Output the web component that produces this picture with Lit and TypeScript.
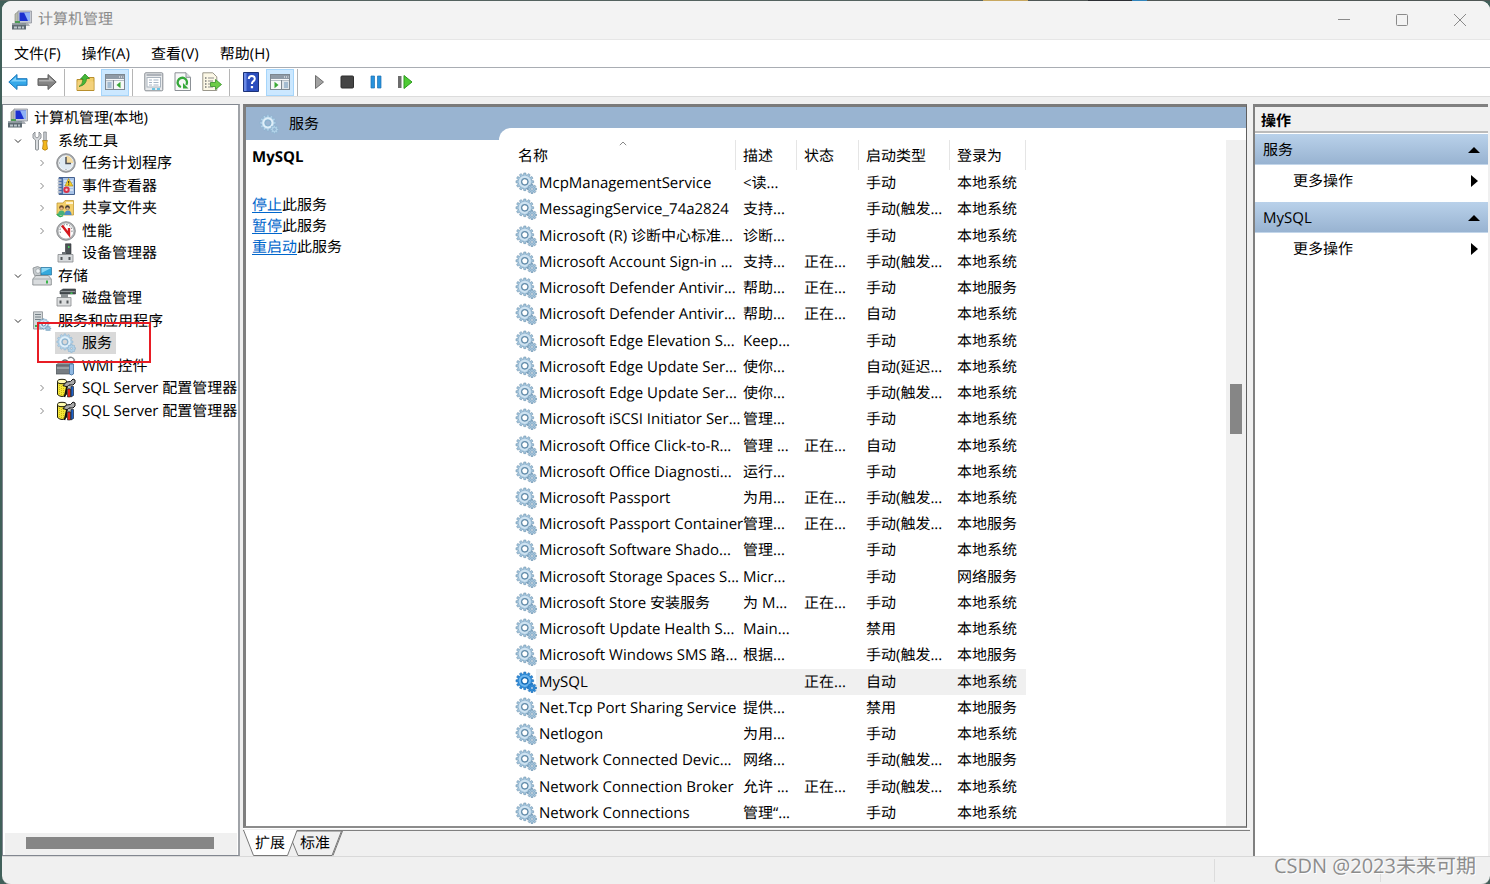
import { LitElement, html, svg, css, nothing, TemplateResult } from "lit";
import { customElement, property, state } from "lit/decorators.js";
import { classMap } from "lit/directives/class-map.js";

/** Outline of a toothed wheel with a round hole, to be filled with the even-odd rule. */
function gearPath(cx: number, cy: number, outer: number, inner: number, hole: number, teeth: number): string {
  const pts: string[] = [];
  const step = (Math.PI * 2) / teeth;
  for (let i = 0; i < teeth; i++) {
    const a = i * step;
    const corners: [number, number][] = [[inner, -0.34], [outer, -0.22], [outer, 0.22], [inner, 0.34]];
    for (const [r, k] of corners) {
      pts.push(`${(cx + r * Math.cos(a + k * step)).toFixed(2)} ${(cy + r * Math.sin(a + k * step)).toFixed(2)}`);
    }
  }
  return `M${pts.join("L")}ZM${cx - hole} ${cy}a${hole} ${hole} 0 1 0 ${hole * 2} 0a${hole} ${hole} 0 1 0 ${-hole * 2} 0Z`;
}

const BIG_GEAR = gearPath(9.8, 9.8, 8.9, 7, 2.9, 12);
const SMALL_GEAR = gearPath(17, 17, 4.7, 3.4, 1.2, 8);

const gears = (fill: string, edge: string, light: string) => svg`
  <path d=${BIG_GEAR} fill=${fill} stroke=${edge} stroke-width="0.5" fill-rule="evenodd"/>
  <circle cx="9.8" cy="9.8" r="5" fill="none" stroke=${light} stroke-width="2.200"/>
  <circle cx="9.8" cy="9.8" r="3.3" fill="none" stroke=${edge} stroke-width="1"/>
  <path d=${SMALL_GEAR} fill=${fill} stroke=${edge} stroke-width="0.6" fill-rule="evenodd"/>`;

const consoleWindow = (arrow: TemplateResult, flip: boolean) => svg`
  <rect x="0.5" y="2.5" width="19" height="15" fill="#f6f7f8" stroke="#7d8790"/>
  <rect x="1" y="3" width="18" height="4" fill="#8f9aa6"/>
  <path d="M14 5h1M16 5h1M18 5h.6" stroke="#fff"/>
  <path d="M1 8.500h18" stroke="#b6bec6"/>
  <rect x=${flip ? 12 : 1} y="9" width="7" height="8" fill="#dfe5ea"/>
  <path d=${flip ? "M11.500 8v9" : "M8.500 8v9"} stroke="#7d8790"/>
  <path d=${flip ? "M14 11h4M14 13h4M14 15h4" : "M2.500 11h4M2.500 13h4M2.500 15h4"} stroke="#6a93b8"/>
  ${arrow}`;

const icons: Record<string, TemplateResult> = {
  computer: svg`
    <path d="M3 4l4-3v11l-4 1z" fill="#b9bdae" stroke="#7c8078" stroke-width=".6"/>
    <path d="M6 1h13.500v12H6z" fill="#c8ccd4" stroke="#868b94" stroke-width=".7"/>
    <path d="M7.500 2.500h10.500v8.500H7.500z" fill="#1b2fd0"/>
    <path d="M12 2.500h6v8.500h-2z" fill="#8fb2f6"/>
    <path d="M10 13h6l2 3H9z" fill="#a8adb3"/>
    <path d="M0 13.500h14v6H0z" fill="#5f6b73"/>
    <path d="M0 13.500h14V15H0z" fill="#8c979e"/>
    <path d="M2 16.500h3v2H2zM6 16.500h3v2H6zM10 16.500h2v2h-2z" fill="#bcc6cc"/>
    <path d="M3 11h5v2H3z" fill="#4c9b55"/>`,
  tools: svg`
    <path d="M3 1L1 3v4l2.500 2v9.500q1.500 1.500 3 0V9L9 7V3L7 1v4.500L5 7 3 5.500z" fill="#d9dcdf" stroke="#777c80" stroke-width=".8"/>
    <path d="M11.700 1h2.600v9h-2.600z" fill="#c9cdd1" stroke="#777c80" stroke-width=".7"/>
    <path d="M10.500 9.500h5l-.8 2.500.8 6q-2.500 2.500-5 0l.8-6z" fill="#f3b71c" stroke="#a87309" stroke-width=".7"/>`,
  clock: svg`
    <circle cx="10" cy="10" r="9.300" fill="#a9adb0" stroke="#77797c" stroke-width=".8"/>
    <circle cx="10" cy="10" r="7.300" fill="#dfeaf3" stroke="#fff" stroke-width=".8"/>
    <path d="M10 10V2.800a7.200 7.200 0 0 1 7.200 7.200z" fill="#f4dba0"/>
    <path d="M10 4v6.500h5" fill="none" stroke="#4b4f55" stroke-width="1.500"/>
    <path d="M10 16v1M3 10h1" stroke="#8f959a"/>`,
  events: svg`
    <path d="M3 1.500h15.500v17H3z" fill="#a8c3e6" stroke="#44608f"/>
    <path d="M3.500 2h3.500v16H3.500z" fill="#4a6da6"/>
    <path d="M1.500 4h4M1.500 7h4M1.500 10h4M1.500 13h4M1.500 16h4" stroke="#c8ccd1" stroke-width="1.300"/>
    <path d="M8 5h9M8 8h9M8 11h9M8 14h9" stroke="#fff"/>
    <path d="M12.500 2.500l4.500 7.500H9z" fill="#f7cf2b" stroke="#a8860a" stroke-width=".6"/>
    <path d="M12.700 5v2.500M12.700 8.300v.9" stroke="#222"/>
    <circle cx="10.500" cy="13.800" r="3.200" fill="#d9334a"/>
    <circle cx="10.500" cy="13.800" r="1.200" fill="#f6c9cf"/>`,
  shared: svg`
    <path d="M1 5h6l2-2.500h8.500V17H1z" fill="#f5d06b" stroke="#c29a35" stroke-width=".8"/>
    <path d="M10 4h7v2h-7z" fill="#fff3cf"/>
    <circle cx="5.500" cy="9.500" r="2.300" fill="#6d4a2a"/><circle cx="11.500" cy="9.500" r="2.300" fill="#3f3a38"/>
    <circle cx="5.500" cy="10.500" r="1.300" fill="#eab98c"/><circle cx="11.500" cy="10.500" r="1.300" fill="#eab98c"/>
    <path d="M2 17q0-4.500 3.500-4.500T9 17z" fill="#48b07b"/><path d="M8.500 17q0-4.500 3.500-4.500t3.500 4.500z" fill="#4d8bc8"/>
    <path d="M1 16q3 4 6 1.500" fill="none" stroke="#2fae5e" stroke-width="1.600"/>`,
  perf: svg`
    <circle cx="10" cy="10" r="9.300" fill="#b3b6b8" stroke="#77797c" stroke-width=".8"/>
    <circle cx="10" cy="10" r="7.400" fill="#fff"/>
    <path d="M4.500 12a6 6 0 1 1 11 0" fill="none" stroke="#6e7377" stroke-dasharray="1.500 1.500"/>
    <path d="M6 4.500L13 13.500V7" fill="none" stroke="#d61a1f" stroke-width="2.400"/>`,
  device: svg`
    <path d="M9.500.8h5.500V11H9.500z" fill="#4e5357" stroke="#303437" stroke-width=".6"/>
    <path d="M12 3h1.500v2H12z" fill="#44d35a"/>
    <path d="M6 9h4v3H6z" fill="#6c7175"/>
    <path d="M2 11.500h15V19H2z" fill="#d7dadc" stroke="#85898c" stroke-width=".8"/>
    <path d="M4.500 14h2v3h-2zM12.500 14h2v3h-2z" fill="#53575a"/>`,
  storage: svg`
    <path d="M1 2q5-3 8 0v8H3q-2-2-2-8z" fill="#c5cacd" stroke="#7e8487" stroke-width=".7"/>
    <circle cx="6" cy="5" r="2.300" fill="#eef2f4" stroke="#8b9397" stroke-width=".6"/>
    <path d="M9 1.500h10.500V9H9z" fill="#35a9dd" stroke="#226f99" stroke-width=".7"/>
    <path d="M9.500 2h9.500L9.500 7z" fill="#8ed8f5"/>
    <path d="M.8 13l3-3.500h12.500l3 3.500v6H.8z" fill="#d9dcde" stroke="#7e8487" stroke-width=".8"/>
    <path d="M1 13h18" stroke="#9ba1a4" stroke-width=".8"/>
    <path d="M14 14.500h2v3h-2z" fill="#3cb54a"/>`,
  disk: svg`
    <path d="M4 3l3-2h12.500v5H4z" fill="#4b5054" stroke="#2e3235" stroke-width=".6"/>
    <path d="M4.500 3h14.500v1H4.500z" fill="#8d9397"/>
    <path d="M14.500 4.500h2V6h-2z" fill="#3ccf50"/>
    <path d="M5 6h7v4H5z" fill="#8a8f92"/>
    <path d="M1 9.500h14V18H1z" fill="#dcdedf" stroke="#85898c" stroke-width=".8"/>
    <path d="M3.500 12.500h2v3h-2zM10.500 12.500h2v3h-2z" fill="#53575a"/>`,
  apps: svg`
    <path d="M1.500.8h9V18h-9z" fill="#d3d8da" stroke="#868d90" stroke-width=".8"/>
    <path d="M3 3.500h6M3 6h6M3 8.500h6" stroke="#758087"/>
    <path d="M3 14h2v2H3z" fill="#3fae54"/>
    <g transform="translate(5.500 7) scale(.62)">${gears("#9fc3dd", "#5a87a8", "#dcebf5")}</g>`,
  service: gears("#a2c3db", "#5f88a6", "#cfe3f1"),
  serviceActive: gears("#2f8ad6", "#1467b0", "#6cb5ee"),
  servicePale: gears("#b2d2e8", "#86aecb", "#e0eff9"),
  wmi: svg`
    <path d="M0 9l4-3h12v3H0z" fill="#9aa0a5" stroke="#5d6366" stroke-width=".6"/>
    <path d="M0 9h16v9H0z" fill="#767c81" stroke="#4d5356" stroke-width=".7"/>
    <path d="M1 12h14" stroke="#bfc5c9"/>
    <path d="M6 5.500q3-3 6 0" fill="none" stroke="#5d6366" stroke-width="1.200"/>
    <path d="M12 2.500q4-3 6.500 1.500l-2 3-2-1" fill="none" stroke="#83898d" stroke-width="1.500"/>
    <path d="M13.500 8h4v10q-2 2-4 0z" fill="#8fb8e2" stroke="#3d6c9c" stroke-width=".8"/>`,
  sql: svg`
    <path d="M1.500 3.500v13q4.500 4 9 0v-13z" fill="#f4e53a" stroke="#1c1b0a"/>
    <ellipse cx="6" cy="3.500" rx="4.500" ry="2.200" fill="#fffbb0" stroke="#1c1b0a"/>
    <path d="M3.500 7v10M5.500 8v10M7.500 8v9" stroke="#c9b90d" stroke-dasharray="1 1"/>
    <path d="M7 7.500l3.500-3.500 4-.5L17 1l2 1v3l-2 2-4 0-1.500 2z" fill="#a9a9a9" stroke="#111"/>
    <path d="M11 8.500L8.500 19" stroke="#111" stroke-width="1.600"/>
    <path d="M12 7.500h2v3.500h-2z" fill="#fff" stroke="#111" stroke-width=".6"/>
    <path d="M11.500 11h3v8h-3z" fill="#e2231a" stroke="#111" stroke-width=".6"/>
    <path d="M15 8.500h2.500v9L15 19z" fill="#1f62c9" stroke="#111" stroke-width=".6"/>`,
  back: svg`<path d="M.8 10L9 2.500v4.200h10v6.600H9v4.200z" fill="#35a8e8" stroke="#1a78bd"/><path d="M2.800 9.500L8 5v3h10v1.500z" fill="#7fd0fa"/>`,
  forward: svg`<path d="M19.200 10L11 2.500v4.200H1v6.600h10v4.200z" fill="#858585" stroke="#5c5c5c"/><path d="M17.200 9.500L12 5v3H2v1.500z" fill="#b0b0b0"/>`,
  folderUp: svg`
    <path d="M1 7.500h6l1.500-2H18V18.500H1z" fill="#f0ce6c" stroke="#b88f2d"/>
    <path d="M1.500 9.500H17.500V18h-16z" fill="#f3d17c"/>
    <path d="M3 14.500q4-2 4-7.500H4.500L9 2l4.500 4.500H10.500Q10.500 13 3 14.500z" fill="#45b839" stroke="#24821d" stroke-width=".7"/>`,
  treePane: consoleWindow(svg`<path d="M15.500 9.800v6.400L11.500 13z" fill="#3aa935"/>`, false),
  actionPane: consoleWindow(svg`<path d="M4.500 9.800v6.400L8.500 13z" fill="#3aa935"/>`, true),
  properties: svg`
    <rect x=".8" y=".8" width="18" height="18" rx="1" fill="#e9ebed" stroke="#858b91"/>
    <path d="M2.500 3h15" stroke="#9aa1a8" stroke-width="1.400"/>
    <rect x="3" y="5.500" width="13.500" height="9.500" fill="#fff" stroke="#a9b3bd"/>
    <path d="M5 8h3M5 10.500h3M5 13h3M9.500 8h5M9.500 10.500h5M9.500 13h5" stroke="#a5b4c4"/>
    <path d="M8 17h3M13 17h3" stroke="#46b8de" stroke-width="1.500"/>`,
  refresh: svg`
    <path d="M2 .8h11l4.500 4.500V18.500H2z" fill="#f7f8f8" stroke="#8c9196"/>
    <path d="M13 .8v4.500h4.500" fill="#dde1e4" stroke="#8c9196"/>
    <path d="M8 15A4.700 4.700 0 1 1 13.300 13" fill="none" stroke="#35a83a" stroke-width="2.300"/>
    <path d="M10 11v5.500h5.500z" fill="#35a83a"/>`,
  exportList: svg`
    <path d="M.8.8h10l4 4V18.500h-14z" fill="#fcf8e6" stroke="#9a978b"/>
    <path d="M3 6h1.500M3 9h1.500M3 12h1.500M3 15h1.500" stroke="#777" stroke-width="1.500"/>
    <path d="M6 6h6M6 9h5M6 12h3M6 15h5" stroke="#8d8d8d"/>
    <path d="M8.500 10.500h5V7.500l6 5-6 5v-3h-5z" fill="#6dcc45" stroke="#35902a" stroke-width=".8"/>`,
  help: svg`
    <path d="M2.500.5h15v19h-15z" fill="#2c4fbe" stroke="#1b3178"/>
    <path d="M3 1h2.500v18H3z" fill="#6b8ae6"/>
    <path d="M7.800 7q0-3 3-3t3 2.700q0 1.700-1.700 2.700-1.200.8-1.200 2.600" fill="none" stroke="#fff" stroke-width="2"/>
    <path d="M9.800 14h2.300v2.300H9.800z" fill="#fff"/>`,
  play: svg`<path d="M6.500 3.500v13L14.500 10z" fill="#a2a2a2" stroke="#6e6e6e"/>`,
  stop: svg`<rect x="3" y="4" width="12.500" height="12" rx="1" fill="#454545" stroke="#2f2f2f"/>`,
  pause: svg`<path d="M4 4h3.500v12H4zM10.500 4h3.500v12h-3.500z" fill="#2893dd" stroke="#1b71b1" stroke-width=".7"/>`,
  resume: svg`<path d="M2 4h3.500v12H2z" fill="#6c6c6c"/><path d="M8 3.500v13L16 10z" fill="#4fcb35" stroke="#2b9a1c"/>`,
};

const icon = (name: string, cls = "icon") => {
  const box = name.startsWith("service") ? "0 0 22 22" : "0 0 20 20";
  return html`<svg class=${cls} viewBox=${box} aria-hidden="true">${icons[name]}</svg>`;
};

interface TreeItem { label: string; icon: string; level: number; open?: boolean; selected?: boolean }

const TREE: TreeItem[] = [
  { label: "计算机管理(本地)", icon: "computer", level: 0 },
  { label: "系统工具", icon: "tools", level: 1, open: true },
  { label: "任务计划程序", icon: "clock", level: 2, open: false },
  { label: "事件查看器", icon: "events", level: 2, open: false },
  { label: "共享文件夹", icon: "shared", level: 2, open: false },
  { label: "性能", icon: "perf", level: 2, open: false },
  { label: "设备管理器", icon: "device", level: 2 },
  { label: "存储", icon: "storage", level: 1, open: true },
  { label: "磁盘管理", icon: "disk", level: 2 },
  { label: "服务和应用程序", icon: "apps", level: 1, open: true },
  { label: "服务", icon: "servicePale", level: 2, selected: true },
  { label: "WMI 控件", icon: "wmi", level: 2 },
  { label: "SQL Server 配置管理器", icon: "sql", level: 2, open: false },
  { label: "SQL Server 配置管理器", icon: "sql", level: 2, open: false },
];

const RUN = "正在...";
const TRIG = "手动(触发...";
const SYS = "本地系统";
const LOC = "本地服务";

const SERVICES: string[][] = [
  ["McpManagementService", "<读...", "", "手动", SYS],
  ["MessagingService_74a2824", "支持...", "", TRIG, SYS],
  ["Microsoft (R) 诊断中心标准...", "诊断...", "", "手动", SYS],
  ["Microsoft Account Sign-in ...", "支持...", RUN, TRIG, SYS],
  ["Microsoft Defender Antivir...", "帮助...", RUN, "手动", LOC],
  ["Microsoft Defender Antivir...", "帮助...", RUN, "自动", SYS],
  ["Microsoft Edge Elevation S...", "Keep...", "", "手动", SYS],
  ["Microsoft Edge Update Ser...", "使你...", "", "自动(延迟...", SYS],
  ["Microsoft Edge Update Ser...", "使你...", "", TRIG, SYS],
  ["Microsoft iSCSI Initiator Ser...", "管理...", "", "手动", SYS],
  ["Microsoft Office Click-to-R...", "管理 ...", RUN, "自动", SYS],
  ["Microsoft Office Diagnosti...", "运行...", "", "手动", SYS],
  ["Microsoft Passport", "为用...", RUN, TRIG, SYS],
  ["Microsoft Passport Container", "管理...", RUN, TRIG, LOC],
  ["Microsoft Software Shado...", "管理...", "", "手动", SYS],
  ["Microsoft Storage Spaces S...", "Micr...", "", "手动", "网络服务"],
  ["Microsoft Store 安装服务", "为 M...", RUN, "手动", SYS],
  ["Microsoft Update Health S...", "Main...", "", "禁用", SYS],
  ["Microsoft Windows SMS 路...", "根据...", "", TRIG, LOC],
  ["MySQL", "", RUN, "自动", SYS],
  ["Net.Tcp Port Sharing Service", "提供...", "", "禁用", LOC],
  ["Netlogon", "为用...", "", "手动", SYS],
  ["Network Connected Devic...", "网络...", "", TRIG, LOC],
  ["Network Connection Broker", "允许 ...", RUN, TRIG, SYS],
  ["Network Connections", "管理“...", "", "手动", SYS],
];

const TOOLS: [string, string][][] = [
  [["back", "后退"], ["forward", "前进"]],
  [["folderUp", "上移"], ["treePane", "显示/隐藏控制台树"]],
  [["properties", "属性"], ["refresh", "刷新"], ["exportList", "导出列表"]],
  [["help", "帮助"], ["actionPane", "显示/隐藏操作窗格"]],
  [["play", "启动服务"], ["stop", "停止服务"], ["pause", "暂停服务"], ["resume", "重启动服务"]],
];

const base = css`
  :host { font-family: "Open Sans", "Noto Sans CJK SC", sans-serif; font-size: 15px; line-height: 20px; color: #000; text-rendering: geometricPrecision; }
  * { box-sizing: border-box; }
  button { font: inherit; color: inherit; text-rendering: inherit; background: none; border: 0; padding: 0; margin: 0; text-align: left; white-space: nowrap; }
  svg { display: block; flex: none; }
  .icon { width: 20px; height: 20px; }
`;

@customElement("mmc-tree")
class MmcTree extends LitElement {
  static styles = [base, css`
    :host { flex: 0 0 238px; min-width: 0; display: flex; flex-direction: column; background: #fff; border: 2px solid #828790; border-width: 1px 2px 1px 1px; border-right-color: #a0a3a8; }
    .view { flex: 1; position: relative; overflow: hidden; }
    .tree { display: grid; grid-auto-rows: 1fr; height: 315px; margin: 2px 0 0; padding: 0; list-style: none; }
    .item { display: flex; align-items: center; padding-left: 4px; }
    .level1 { padding-left: 10px; }
    .level2 { padding-left: 34px; }
    .twisty { width: 18px; height: 18px; display: grid; place-items: center start; }
    .blank { width: 18px; }
    .chevron { width: 10px; height: 10px; fill: none; stroke: #333; }
    .closed { stroke: #888; }
    .node { display: flex; align-items: center; height: 22px; padding: 0 4px 0 1px; gap: 6px; }
    .selected { background: #d9d9d9; }
    .mark { position: absolute; left: 34px; top: 217px; width: 114px; height: 41px; border: 2px solid #e81c24; pointer-events: none; }
    .bar { height: 22px; margin: 0 1px 0 2px; background: #f0f0f0; padding: 4px 23px 6px 21px; }
    .thumb { height: 12px; background: #868686; }
  `];

  render() {
    return html`
      <div class="view">
        <ul class="tree">
          ${TREE.map((t) => html`
            <li class="item level${t.level}">
              ${t.level === 0 ? nothing : t.open === undefined ? html`<span class="blank"></span>` : html`
                <button class="twisty" aria-label=${t.label} aria-expanded=${t.open}>
                  <svg class=${classMap({ chevron: true, closed: !t.open })} viewBox="0 0 10 10">
                    <path d=${t.open ? "M2 3.500l3 3 3-3" : "M3.500 2l3 3-3 3"}/>
                  </svg>
                </button>`}
              <button class=${classMap({ node: true, selected: !!t.selected })}>${icon(t.icon)}<span>${t.label}</span></button>
            </li>`)}
        </ul>
        <div class="mark"></div>
      </div>
      <div class="bar"><div class="thumb"></div></div>`;
  }
}

@customElement("mmc-services")
class MmcServices extends LitElement {
  @state() private current = "MySQL";

  static styles = [base, css`
    :host { flex: 1; min-width: 0; display: flex; flex-direction: column; }
    .frame { flex: 1; min-height: 0; display: grid; grid-template-columns: 253px 1fr; background: #99b4d1; border: 3px solid #7a7a7a; border-width: 3px 1px 2px 3px; border-color: #7a7a7a #5f5f5f #8c8c8c #7f7f7f; margin-right: 3px; }
    .side { display: flex; flex-direction: column; }
    .title { height: 33px; display: flex; align-items: center; gap: 10px; padding-left: 13px; }
    .detail { flex: 1; background: #fff; padding: 7px 6px; line-height: 21px; }
    .name { margin: 0 0 27px; font-size: 15px; line-height: 21px; font-weight: 700; }
    .line { margin: 0; }
    a { color: #0066cc; text-underline-offset: 2px; }
    .list { display: flex; flex-direction: column; min-height: 0; background: #fff; margin-top: 21px; border-top-left-radius: 12px; padding: 12px 0 0 10px; }
    .body { flex: 1; min-height: 0; display: flex; justify-content: space-between; }
    table { display: flex; flex-direction: column; width: 517px; border-spacing: 0; white-space: nowrap; }
    tbody { flex: 1; display: grid; grid-auto-rows: 1fr; }
    tr { display: grid; grid-template-columns: 227px 61px 62px 91px 76px; align-items: center; }
    thead tr { height: 30px; align-items: stretch; }
    th { position: relative; padding: 6px 0 0 7px; font-weight: 400; text-align: left; border-right: 1px solid #e5e5e5; }
    th:first-child { padding-left: 9px; }
    .sort { position: absolute; left: 110px; top: 1px; width: 8px; height: 5px; fill: none; stroke: #888; }
    td { padding: 0 0 0 7px; }
    .svc { display: flex; align-items: center; gap: 2px; padding-left: 6px; }
    .gear { width: 22px; height: 22px; }
    .chosen { background: linear-gradient(to right, transparent 27px, #f0f0f0 27px); }
    .vbar { width: 20px; background: #f0f0f0; display: grid; grid-template-rows: 244fr 50fr 392fr; justify-items: center; }
    .thumb { grid-row: 2; width: 12px; background: #868686; }
    .tabs { position: relative; height: 28px; display: flex; padding-left: 12px; gap: 15px; background: linear-gradient(#fff 1px, #f0f0f0 1px 2px, #808080 2px 3px, transparent 3px); }
    .shape { position: absolute; left: 0; top: 2px; width: 102px; height: 26px; }
    .tab { position: relative; padding-top: 2px; }
  `];

  render() {
    return html`
      <div class="frame">
        <div class="side">
          <div class="title">${icon("servicePale")}<span>服务</span></div>
          <div class="detail">
            <h2 class="name">${this.current}</h2>
            ${["停止", "暂停", "重启动"].map((a) => html`<p class="line"><a href="#">${a}</a>此服务</p>`)}
          </div>
        </div>
        <div class="list">
          <div class="body">
            <table>
              <thead><tr>
                <th scope="col">名称<svg class="sort" viewBox="0 0 8 5"><path d="M.8 4.200L4 1l3.200 3.200"/></svg></th>
                ${["描述", "状态", "启动类型", "登录为"].map((h) => html`<th scope="col">${h}</th>`)}
              </tr></thead>
              <tbody>
                ${SERVICES.map(([name, ...rest]) => {
                  const chosen = name === this.current;
                  return html`
                    <tr class=${classMap({ chosen })} @click=${() => (this.current = name)}>
                      <td class="svc">${icon(chosen ? "serviceActive" : "service", "gear")}<span>${name}</span></td>
                      ${rest.map((c) => html`<td>${c}</td>`)}
                    </tr>`;
                })}
              </tbody>
            </table>
            <div class="vbar"><div class="thumb"></div></div>
          </div>
        </div>
      </div>
      <div class="tabs">
        <svg class="shape" viewBox="0 0 102 26" fill="none">
          <path d="M50 1h48.500l-9.500 24.500H55L49.500 12z" fill="#f0f0f0" stroke="#777"/>
          <path d="M99.500 1L90 25.500" stroke="#777"/>
          <path d="M.5 0l10 25.500h34L54 0z" fill="#fff"/>
          <path d="M.5 0l10 25.500h34L54 .5" stroke="#777"/>
        </svg>
        <button class="tab">扩展</button><button class="tab">标准</button>
      </div>`;
  }
}

@customElement("mmc-actions")
class MmcActions extends LitElement {
  @property({ attribute: false }) groups: string[] = [];

  static styles = [base, css`
    :host { flex: 0 0 235px; display: flex; flex-direction: column; background: #fff; border-left: 2px solid #808080; border-top: 3px solid #808080; }
    .heading { height: 26px; margin: 0; padding: 4px 6px 0; font-size: 15px; line-height: 20px; font-weight: 700; background: #f0f0f0; border-bottom: 2px solid #bbb; }
    .group { padding: 1px 0 5px; }
    .row { display: flex; align-items: center; justify-content: space-between; width: 100%; height: 31px; padding: 0 8px; }
    .more { padding: 0 10px 0 38px; }
    .top { padding-top: 2px; background: linear-gradient(#b9d1ea, #98b3d1); border-bottom: 1px solid #c3d6ea; }
    .up { width: 12px; height: 6px; }
    .right { width: 7px; height: 12px; }
  `];

  render() {
    return html`
      <h2 class="heading">操作</h2>
      ${this.groups.map((g) => html`
        <div class="group">
          <button class="row top"><span>${g}</span><svg class="up" viewBox="0 0 12 6"><path d="M0 6L6 0l6 6z"/></svg></button>
          <button class="row more"><span>更多操作</span><svg class="right" viewBox="0 0 7 12"><path d="M0 0l7 6-7 6z"/></svg></button>
        </div>`)}`;
  }
}

@customElement("app-root")
class AppRoot extends LitElement {
  static styles = [base, css`
    :host { display: block; height: 100vh; padding: 1px 0 0 2px; overflow: hidden; background: linear-gradient(to right, #54625f 66%, #c8a860 66% 69%, #4f5755 69% 73%, #2c2e33 73% 76%, #3286bd 76% 77%, #4f5755 77%) top / 100% 1px no-repeat, #41605a; }
    .window { position: relative; height: 100%; display: flex; flex-direction: column; background: #f0f0f0; border-radius: 9px; overflow: hidden; border-bottom: 1px solid #a5a5a5; }
    .titlebar { height: 39px; display: flex; align-items: center; gap: 6px; padding: 0 1px 0 10px; background: #f3f3f3; border-bottom: 1px solid #e6e6e6; color: #8b8b8b; }
    .caption { flex: 1; padding-bottom: 2px; margin: 0; font-size: 15px; font-weight: 400; }
    .control { width: 58px; height: 38px; display: grid; place-items: center; }
    .glyph { width: 14px; height: 14px; fill: none; stroke: #8a8a8a; }
    .controls { display: flex; }
    .menu { height: 27px; display: flex; gap: 21px; padding: 0 12px; background: #fff; }
    .tools { height: 30px; display: flex; align-items: center; background: #fff; border-top: 1px solid #a9adb3; border-bottom: 1px solid #dcdcdc; padding-left: 2px; }
    .set { display: flex; gap: 1px; }
    .set + .set { margin-left: 3px; padding-left: 7px; border-left: 1px solid #b5b5b5; }
    .tool { width: 28px; height: 27px; display: grid; place-items: center; border: 1px solid transparent; }
    .on { background: #cce8ff; border-color: #a6d5fa; }
    .main { flex: 1; min-height: 0; display: flex; padding: 7px 2px 0 0; gap: 3px; }
    .status { height: 28px; display: flex; justify-content: flex-end; border-top: 1px solid #d9d9d9; padding: 2px 2px 2px 0; }
    .cell { width: 166px; border-left: 1px solid #dcdcdc; }
    .narrow { width: 108px; }
    .credit { position: absolute; right: 14px; bottom: 4px; font-size: 20px; line-height: 28px; color: #8c8c8c; text-shadow: 1px 1px 0 #fff; }
  `];

  render() {
    return html`
      <div class="window">
        <header class="titlebar">
          ${icon("computer")}
          <h1 class="caption">计算机管理</h1>
          <div class="controls">
            <button class="control" aria-label="最小化"><svg class="glyph" viewBox="0 0 14 14"><path d="M1 6.500h12"/></svg></button>
            <button class="control" aria-label="最大化"><svg class="glyph" viewBox="0 0 14 14"><rect x="1.500" y="1.500" width="11" height="11" rx="1"/></svg></button>
            <button class="control" aria-label="关闭"><svg class="glyph" viewBox="0 0 14 14"><path d="M1 1l12 12M13 1L1 13"/></svg></button>
          </div>
        </header>
        <nav class="menu">
          ${["文件(F)", "操作(A)", "查看(V)", "帮助(H)"].map((m) => html`<button>${m}</button>`)}
        </nav>
        <div class="tools" role="toolbar">
          ${TOOLS.map((set) => html`
            <div class="set">
              ${set.map(([name, label]) => html`
                <button class=${classMap({ tool: true, on: name.endsWith("Pane") })} aria-label=${label}>${icon(name)}</button>`)}
            </div>`)}
        </div>
        <main class="main">
          <mmc-tree></mmc-tree>
          <mmc-services></mmc-services>
          <mmc-actions .groups=${["服务", "MySQL"]}></mmc-actions>
        </main>
        <footer class="status"><div class="cell"></div><div class="cell narrow"></div></footer>
        <div class="credit">CSDN @2023未来可期</div>
      </div>`;
  }
}
